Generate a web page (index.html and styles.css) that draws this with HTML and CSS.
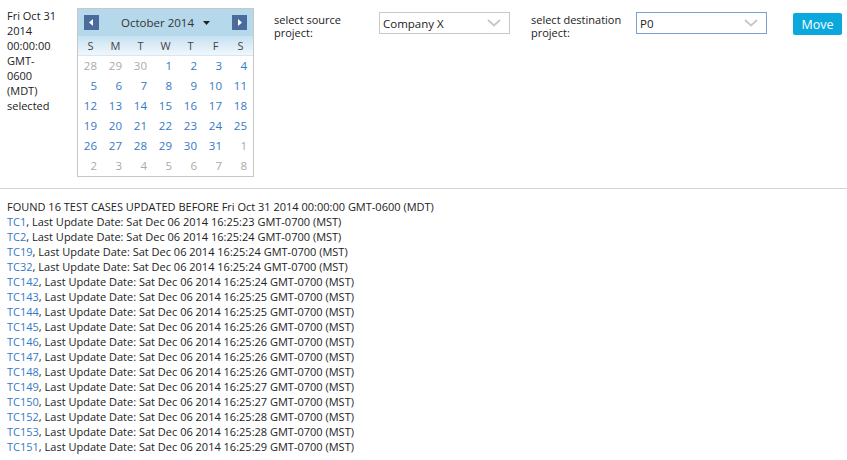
FILE: index.html
```html
<!DOCTYPE html>
<html>
<head>
<meta charset="utf-8">
<link rel="stylesheet" href="styles.css">
</head>
<body>
<div class="top">
  <div class="selected">Fri Oct 31 2014 00:00:00 GMT-0600 (MDT) selected</div>
  <div class="cal">
    <div class="cal-head">
      <span class="nav prev"><svg width="15" height="15" viewBox="0 0 15 15"><path d="M9 4 L5 7.5 L9 11 Z" fill="#fff"/></svg></span>
      <span class="title">October 2014 <svg class="caret" width="7" height="4" viewBox="0 0 7 4"><path d="M0 0 H7 L3.5 4 Z" fill="#222"/></svg></span>
      <span class="nav next"><svg width="15" height="15" viewBox="0 0 15 15"><path d="M6 4 L10 7.5 L6 11 Z" fill="#fff"/></svg></span>
    </div>
    <div class="dow"><span>S</span><span>M</span><span>T</span><span>W</span><span>T</span><span>F</span><span>S</span></div>
    <div class="days">
      <span class="o">28</span><span class="o">29</span><span class="o">30</span><span>1</span><span>2</span><span>3</span><span>4</span>
      <span>5</span><span>6</span><span>7</span><span>8</span><span>9</span><span>10</span><span>11</span>
      <span>12</span><span>13</span><span>14</span><span>15</span><span>16</span><span>17</span><span>18</span>
      <span>19</span><span>20</span><span>21</span><span>22</span><span>23</span><span>24</span><span>25</span>
      <span>26</span><span>27</span><span>28</span><span>29</span><span>30</span><span>31</span><span class="o">1</span>
      <span class="o">2</span><span class="o">3</span><span class="o">4</span><span class="o">5</span><span class="o">6</span><span class="o">7</span><span class="o">8</span>
    </div>
  </div>
  <div class="label first">select source project:</div>
  <div class="select"><span>Company X</span><svg width="14" height="8" viewBox="0 0 14 8"><path d="M1 1 L7 6.5 L13 1" fill="none" stroke="#c8c8c8" stroke-width="2"/></svg></div>
  <div class="label second">select destination project:</div>
  <div class="select focus"><span>P0</span><svg width="14" height="8" viewBox="0 0 14 8"><path d="M1 1 L7 6.5 L13 1" fill="none" stroke="#c8c8c8" stroke-width="2"/></svg></div>
  <button class="move">Move</button>
</div>
<div class="rule"></div>
<div class="results">
  <div>FOUND 16 TEST CASES UPDATED BEFORE Fri Oct 31 2014 00:00:00 GMT-0600 (MDT)</div>
  <div><a>TC1</a>, Last Update Date: Sat Dec 06 2014 16:25:23 GMT-0700 (MST)</div>
  <div><a>TC2</a>, Last Update Date: Sat Dec 06 2014 16:25:24 GMT-0700 (MST)</div>
  <div><a>TC19</a>, Last Update Date: Sat Dec 06 2014 16:25:24 GMT-0700 (MST)</div>
  <div><a>TC32</a>, Last Update Date: Sat Dec 06 2014 16:25:24 GMT-0700 (MST)</div>
  <div><a>TC142</a>, Last Update Date: Sat Dec 06 2014 16:25:24 GMT-0700 (MST)</div>
  <div><a>TC143</a>, Last Update Date: Sat Dec 06 2014 16:25:25 GMT-0700 (MST)</div>
  <div><a>TC144</a>, Last Update Date: Sat Dec 06 2014 16:25:25 GMT-0700 (MST)</div>
  <div><a>TC145</a>, Last Update Date: Sat Dec 06 2014 16:25:26 GMT-0700 (MST)</div>
  <div><a>TC146</a>, Last Update Date: Sat Dec 06 2014 16:25:26 GMT-0700 (MST)</div>
  <div><a>TC147</a>, Last Update Date: Sat Dec 06 2014 16:25:26 GMT-0700 (MST)</div>
  <div><a>TC148</a>, Last Update Date: Sat Dec 06 2014 16:25:26 GMT-0700 (MST)</div>
  <div><a>TC149</a>, Last Update Date: Sat Dec 06 2014 16:25:27 GMT-0700 (MST)</div>
  <div><a>TC150</a>, Last Update Date: Sat Dec 06 2014 16:25:27 GMT-0700 (MST)</div>
  <div><a>TC152</a>, Last Update Date: Sat Dec 06 2014 16:25:28 GMT-0700 (MST)</div>
  <div><a>TC153</a>, Last Update Date: Sat Dec 06 2014 16:25:28 GMT-0700 (MST)</div>
  <div><a>TC151</a>, Last Update Date: Sat Dec 06 2014 16:25:29 GMT-0700 (MST)</div>
</div>
</body>
</html>
```
FILE: styles.css
```css
html, body {
  margin: 0;
  padding: 0;
  background: #fff;
}
body {
  font-family: "Open Sans", "DejaVu Sans", sans-serif;
  font-size: 11px;
  color: #222;
}
.top {
  display: flex;
  align-items: flex-start;
  padding: 8px 0 0 7px;
}
.selected {
  width: 50px;
  line-height: 15px;
}
.cal {
  margin-left: 20px;
  width: 175px;
  border: 1px solid #c8c8c8;
}
.cal-head {
  height: 27px;
  background: #b5d9ea;
  display: flex;
  align-items: center;
  padding: 0 6px;
}
.nav {
  width: 15px;
  height: 15px;
  background: #4b6b9d;
  display: flex;
}
.title {
  flex: 1;
  text-align: center;
  font-size: 11.5px;
  color: #333;
}
.caret {
  margin-left: 6px;
  vertical-align: middle;
  position: relative;
  top: -1px;
}
.dow {
  height: 20px;
  display: grid;
  grid-template-columns: repeat(7, 25px);
  background: linear-gradient(#c6e1f2, #f1f7fc);
  border-bottom: 1px solid #d6e6f2;
  box-sizing: border-box;
}
.dow span {
  text-align: center;
  line-height: 19px;
  color: #444;
}
.days {
  display: grid;
  grid-template-columns: repeat(7, 25px);
  grid-auto-rows: 20px;
}
.days span {
  text-align: right;
  padding-right: 6px;
  line-height: 20px;
  color: #3679c6;
  font-size: 11.5px;
}
.days span.o {
  color: #aaa;
}
.label {
  line-height: 13px;
  padding-top: 5px;
  width: 105px;
}
.label.first {
  margin-left: 20px;
}
.label.second {
  margin-left: 21px;
}
.select {
  margin-top: 4px;
  width: 131px;
  height: 22px;
  box-sizing: border-box;
  border: 1px solid #c9c9c9;
  display: flex;
  align-items: center;
  justify-content: space-between;
  padding: 0 8px 0 3px;
  font-size: 11.5px;
}
.select.focus {
  border-color: #7b9fd4;
}
.move {
  margin-left: 26px;
  margin-top: 5px;
  width: 49px;
  height: 22px;
  border: none;
  border-radius: 2px;
  background: #0aa8dd;
  color: #fff;
  font-family: "Open Sans", sans-serif;
  font-size: 12.5px;
  padding: 0;
}
.rule {
  margin-top: 11px;
  border-top: 1px solid #d4d4d4;
}
.results {
  padding: 10px 0 0 7px;
  line-height: 15px;
}
.results a {
  color: #3679c6;
}
```
